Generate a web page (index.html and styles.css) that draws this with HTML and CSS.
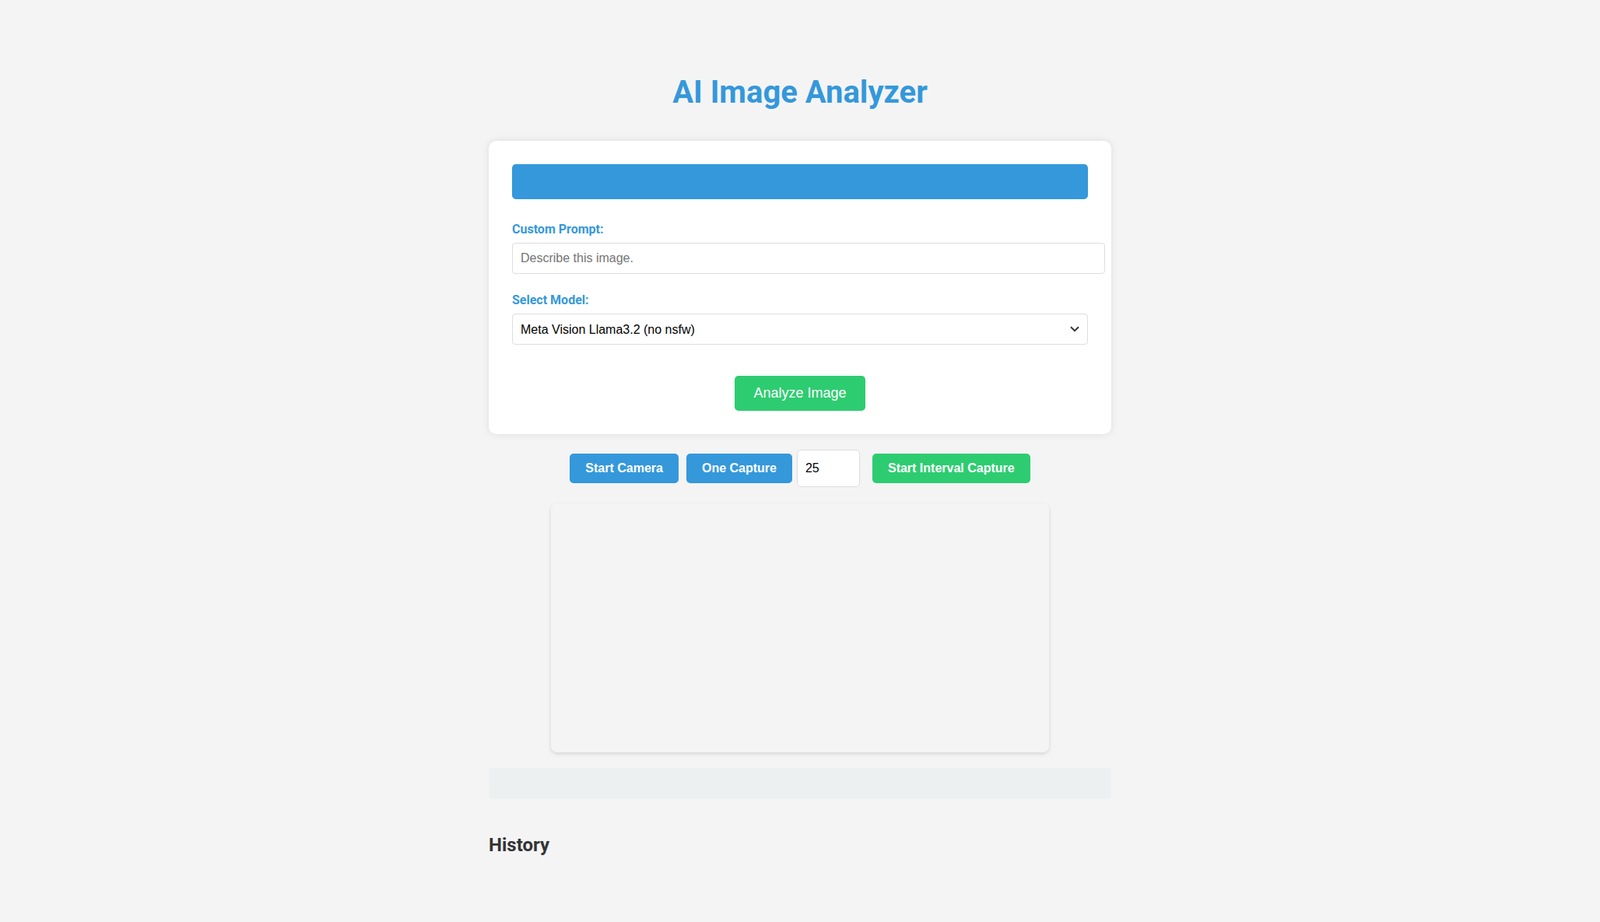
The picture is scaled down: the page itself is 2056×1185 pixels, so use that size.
FILE: index.html
```html
<!DOCTYPE html>
<html lang="en">
<head>
<meta charset="utf-8">
<title>AI Image Analyzer</title>
<link rel="stylesheet" href="styles.css">
</head>
<body>
<div class="container">
  <h1 class="title">AI Image Analyzer</h1>
  <div class="card">
    <div class="upload-bar"></div>
    <label class="field-label" for="prompt">Custom Prompt:</label>
    <input class="prompt-input" id="prompt" type="text" placeholder="Describe this image.">
    <label class="field-label" for="model">Select Model:</label>
    <div class="select-wrap">
      <select class="model-select" id="model">
        <option>Meta Vision Llama3.2 (no nsfw)</option>
      </select>
      <svg class="chevron" width="12" height="8" viewBox="0 0 12 8"><path d="M1 1.2 L6 6.2 L11 1.2" fill="none" stroke="#333" stroke-width="2"/></svg>
    </div>
    <div class="analyze-row">
      <button class="btn-analyze">Analyze Image</button>
    </div>
  </div>
  <div class="controls">
    <button class="btn btn-blue">Start Camera</button>
    <button class="btn btn-blue">One Capture</button>
    <input class="interval-input" type="number" value="25">
    <button class="btn btn-green">Start Interval Capture</button>
  </div>
  <div class="video-box"></div>
  <div class="result-bar"></div>
  <h2 class="history-title">History</h2>
</div>
</body>
</html>
```
FILE: styles.css
```css
html, body {
  margin: 0;
  padding: 0;
}
body {
  background: #f4f4f4;
  font-family: Roboto, "Liberation Sans", Arial, sans-serif;
  color: #333;
}
.container {
  width: 800px;
  margin: 0 auto;
  padding-top: 95px;
  padding-bottom: 60px;
}
.title {
  margin: 0 0 39px;
  font-size: 40px;
  font-weight: 700;
  line-height: normal;
  text-align: center;
  color: #3498db;
}
.card {
  background: #fff;
  padding: 30px;
  border-radius: 10px;
  box-shadow: 0 0 10px rgba(0, 0, 0, 0.1);
}
.upload-bar {
  height: 45px;
  background: #3498db;
  border-radius: 5px;
  margin-bottom: 29px;
}
.field-label {
  display: block;
  font-size: 16px;
  font-weight: 700;
  line-height: normal;
  color: #3498db;
  margin-bottom: 8px;
}
.prompt-input {
  display: block;
  box-sizing: content-box;
  width: 100%;
  height: 18px;
  padding: 10px;
  margin: 0 0 24px;
  border: 1px solid #ddd;
  border-radius: 4px;
  font-family: "Liberation Sans", Arial, sans-serif;
  font-size: 16px;
  color: #000;
  background: #fff;
  outline: none;
}
.prompt-input::placeholder {
  color: #757575;
}
.select-wrap {
  position: relative;
  margin-bottom: 40px;
}
.model-select {
  display: block;
  width: 100%;
  height: 40px;
  box-sizing: border-box;
  -webkit-appearance: none;
  appearance: none;
  padding: 0 10px;
  border: 1px solid #ddd;
  border-radius: 4px;
  background: #fff;
  font-family: "Liberation Sans", Arial, sans-serif;
  font-size: 16px;
  color: #000;
  outline: none;
}
.chevron {
  position: absolute;
  right: 11px;
  top: 16px;
  pointer-events: none;
}
.analyze-row {
  display: flex;
  justify-content: center;
}
.btn-analyze {
  height: 45px;
  padding: 0 24px;
  border: none;
  border-radius: 5px;
  background: #2ecc71;
  color: #fff;
  font-family: "Liberation Sans", Arial, sans-serif;
  font-size: 18px;
  cursor: pointer;
}
.controls {
  display: flex;
  justify-content: center;
  align-items: center;
  margin-top: 20px;
}
.btn {
  height: 38px;
  padding: 0 20px;
  margin: 0 5px;
  border: none;
  border-radius: 5px;
  color: #fff;
  font-family: "Liberation Sans", Arial, sans-serif;
  font-size: 16px;
  font-weight: 700;
  cursor: pointer;
}
.btn-blue {
  background: #3498db;
}
.btn-green {
  background: #2ecc71;
}
.interval-input {
  box-sizing: border-box;
  width: 81px;
  height: 48px;
  margin: 0 11px 0 1px;
  padding: 0 10px;
  border: 1px solid #ddd;
  border-radius: 5px;
  background: #fff;
  font-family: "Liberation Sans", Arial, sans-serif;
  font-size: 16px;
  color: #000;
  outline: none;
  -moz-appearance: textfield;
}
.interval-input::-webkit-inner-spin-button,
.interval-input::-webkit-outer-spin-button {
  -webkit-appearance: none;
  margin: 0;
}
.video-box {
  width: 640px;
  height: 320px;
  margin: 21px auto 0;
  border-radius: 8px;
  background: #f4f4f4;
  box-shadow: 0 2px 5px rgba(0, 0, 0, 0.13);
}
.result-bar {
  height: 40px;
  margin-top: 20px;
  border-radius: 5px;
  background: #ecf0f1;
}
.history-title {
  margin: 45px 0 0;
  font-size: 24px;
  font-weight: 700;
  line-height: normal;
  color: #333;
}
```
